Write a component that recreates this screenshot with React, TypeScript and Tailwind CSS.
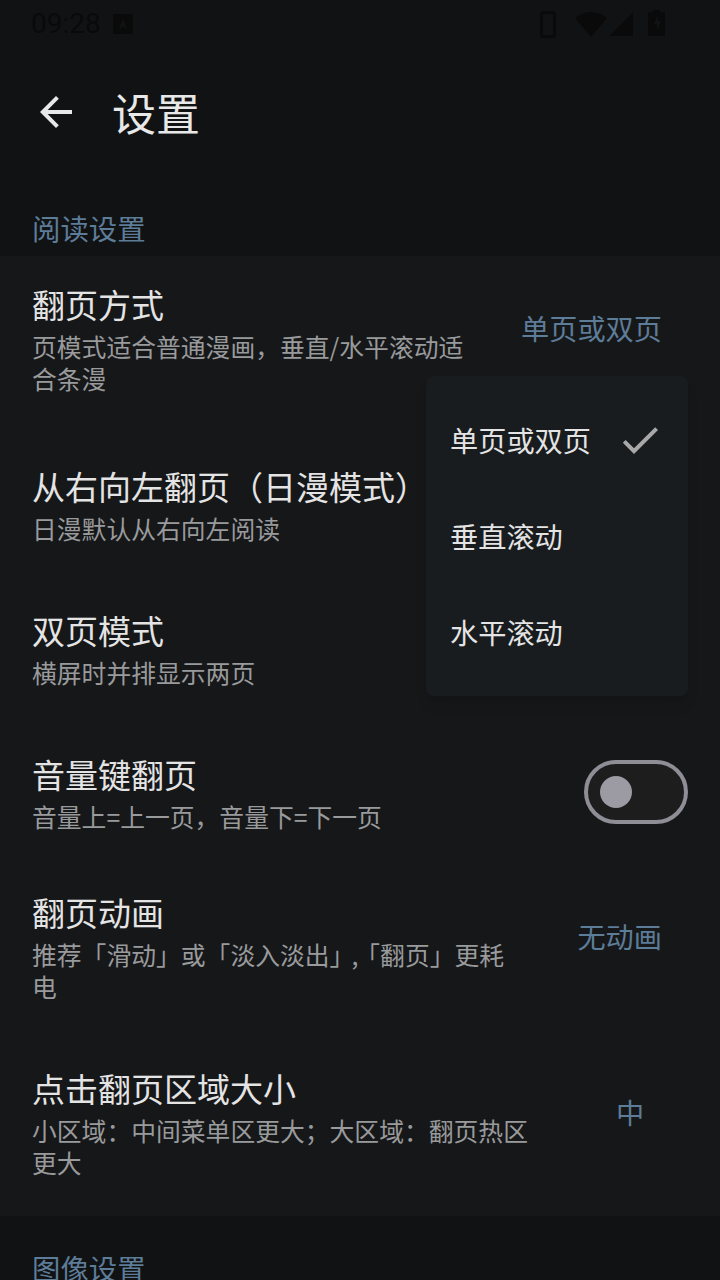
import type { ReactNode } from "react"

const cjk = "font-['Noto_Sans_CJK_SC','Noto_Sans',sans-serif]"

const Toggle = () => (
  <div className="flex h-[64px] w-[104px] shrink-0 items-center rounded-full border-4 border-[#8f8d95] bg-[#1e1d1e] pl-3">
    <div className="h-8 w-8 rounded-full bg-[#9c9aa3]" />
  </div>
)

const Value = ({ text }: { text: string }) => (
  <div className="ml-[56px] mr-[26px] mt-[52px] min-w-[64px] shrink-0 self-start text-center text-[28.2px] leading-[40px] text-[#5d7c98]">
    {text}
  </div>
)

interface RowProps {
  title: string
  sub: ReactNode
  value?: string
  toggle?: boolean
}

const Row = ({ title, sub, value, toggle }: RowProps) => (
  <div className={`flex items-center pl-8 pr-8 ${toggle ? "h-[144px]" : "h-[176px]"}`}>
    <div className={`min-w-0 flex-1 self-start ${toggle ? "pt-[32px]" : "pt-[26px]"}`}>
      <div className="text-[33px] leading-[44px] text-[#e4e4e4]">{title}</div>
      <div className="mt-[4px] text-[24.8px] leading-[32px] text-[#999a9c]">{sub}</div>
    </div>
    {value && <Value text={value} />}
    {toggle && <Toggle />}
  </div>
)

const StatusBar = () => (
  <div className="flex h-12 items-center pl-[31px] pr-[55px] text-[#0a0a0a]">
    <span className="font-['Roboto',sans-serif] text-[28px] leading-none">09:28</span>
    <svg className="ml-[12px]" width="20" height="20" viewBox="0 0 20 20">
      <path fill="currentColor" fillRule="evenodd" d="M0 0h20v20H0zM10 4l-4 11h2l.8-2.4h2.4L12 15h2z" />
    </svg>
    <div className="flex-1" />
    <svg width="16" height="27" viewBox="0 0 16 27" fill="none" stroke="currentColor" strokeWidth="3">
      <rect x="1.5" y="1.5" width="13" height="24" rx="2" />
    </svg>
    <svg className="ml-[19px]" width="32" height="25" viewBox="0 0 32 25">
      <path fill="currentColor" d="M16 25 0 6Q7 0 16 0t16 6z" />
    </svg>
    <svg className="ml-[2px]" width="24" height="24" viewBox="0 0 24 24">
      <path fill="currentColor" d="M24 0v24H0z" />
    </svg>
    <svg className="ml-[15px] -mt-[2px]" width="17" height="26" viewBox="0 0 17 26">
      <path fill="currentColor" fillRule="evenodd" d="M5 0h7v2h5v24H0V2h5zM10 5l-4 9h3v7l4-10h-3z" />
    </svg>
  </div>
)

export default function App() {
  return (
    <div className={`relative h-[1280px] w-[720px] overflow-hidden bg-[#111213] ${cjk}`}>
      <StatusBar />

      <div className="flex h-[128px] items-center pl-8">
        <svg width="48" height="48" viewBox="0 0 24 24" className="text-[#e8e8e8]">
          <path fill="currentColor" d="M20 11H7.83l5.59-5.59L12 4l-8 8 8 8 1.41-1.41L7.83 13H20v-2z" />
        </svg>
        <h1 className="ml-[32px] text-[44px] leading-[56px] text-[#e8e8e8]">设置</h1>
      </div>

      <div className="flex h-[80px] items-center pl-8 pt-[24px] text-[28.4px] leading-[40px] text-[#5d7c98]">阅读设置</div>

      <div className="bg-[#161719]">
        <Row title="翻页方式" sub="页模式适合普通漫画，垂直/水平滚动适合条漫" value="单页或双页" />
        <Row title="从右向左翻页（日漫模式）" sub="日漫默认从右向左阅读" toggle />
        <Row title="双页模式" sub="横屏时并排显示两页" toggle />
        <Row title="音量键翻页" sub="音量上=上一页，音量下=下一页" toggle />
        <Row
          title="翻页动画"
          sub={
            <>
              <span className="whitespace-nowrap">
                推荐「滑动」或「淡入淡出<span className="tracking-[-3px]">」,</span>「翻页」更耗
              </span>
              <br />电
            </>
          }
          value="无动画"
        />
        <Row title="点击翻页区域大小" sub="小区域：中间菜单区更大；大区域：翻页热区更大" value="中" />
      </div>

      <div className="flex h-[80px] items-center pl-8 pt-[24px] text-[28.4px] leading-[40px] text-[#5d7c98]">图像设置</div>

      {/* dropdown for the page mode row */}
      <div className="absolute left-[426px] top-[376px] w-[262px] rounded-lg bg-[#191c1f] py-4 shadow-lg">
        <div className="flex h-24 items-center justify-between pl-6 pr-6 text-[28.2px] text-[#e4e4e4]">
          单页或双页
          <svg width="48" height="48" viewBox="0 0 24 24" className="text-[#a8a8a8]">
            <path fill="currentColor" d="M9 16.17 4.83 12l-1.42 1.41L9 19 21 7l-1.41-1.41z" />
          </svg>
        </div>
        <div className="flex h-24 items-center pl-6 text-[28.2px] text-[#e4e4e4]">垂直滚动</div>
        <div className="flex h-24 items-center pl-6 text-[28.2px] text-[#e4e4e4]">水平滚动</div>
      </div>
    </div>
  )
}
